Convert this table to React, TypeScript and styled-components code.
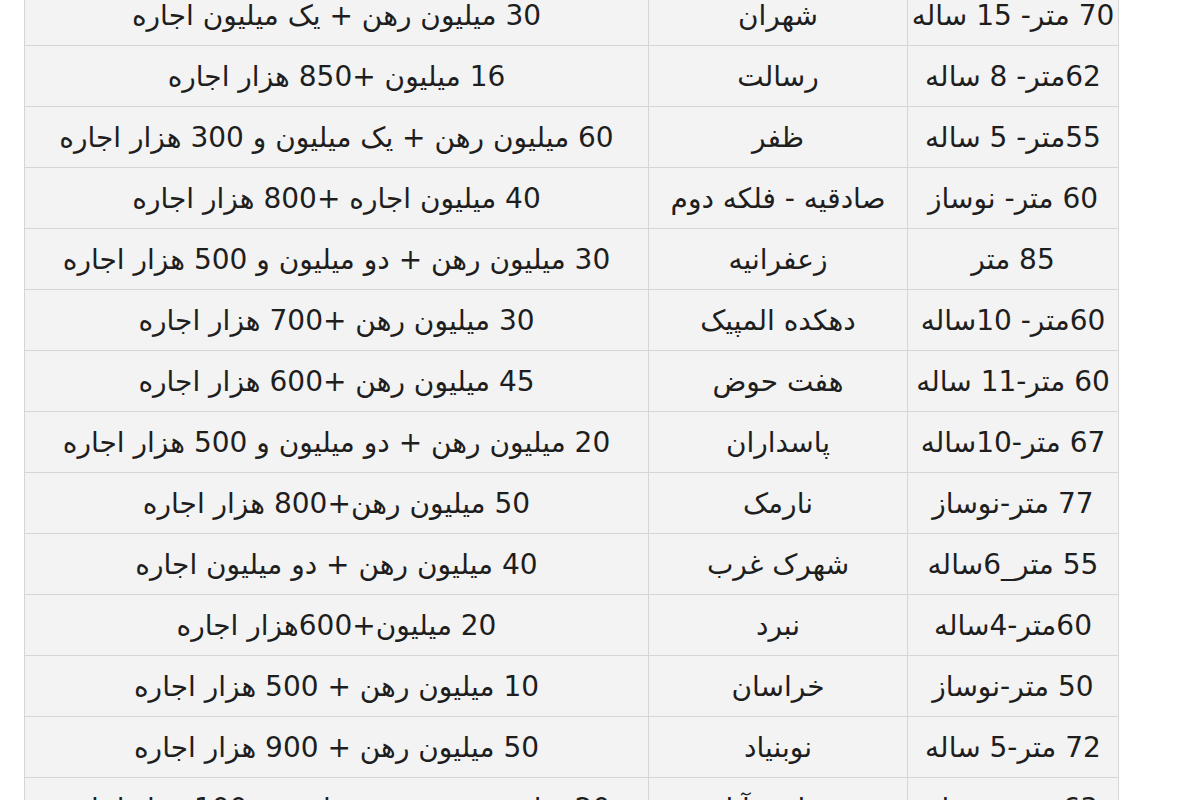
import { createGlobalStyle, styled } from 'styled-components';

const GlobalStyle = createGlobalStyle`
  html, body {
    margin: 0;
    padding: 0;
    background: #fff;
    overflow: hidden;
  }
  body {
    font-family: 'DejaVu Sans', sans-serif;
  }
`;

const Page = styled.div`
  width: 1200px;
  height: 800px;
  overflow: hidden;
  padding-left: 24px;
  box-sizing: border-box;
`;

const Table = styled.table`
  direction: rtl;
  margin-top: -16px;
  width: 1094px;
  border-collapse: collapse;
  table-layout: fixed;
  background: #f3f3f3;
  border: 1px solid #d6d6d6;
`;

const Col = styled.col<{ $w: number }>`
  width: ${p => p.$w}px;
`;

const Cell = styled.td`
  height: 60px;
  padding: 0;
  border: 1px solid #d6d6d6;
  text-align: center;
  vertical-align: middle;
  font-family: 'DejaVu Sans', sans-serif;
  font-size: 28px;
  color: #1e1e1e;
  white-space: nowrap;
  overflow: hidden;
`;

const rows: [string, string, string][] = [
  ['70 متر- 15 ساله', 'شهران', '30 میلیون رهن + یک میلیون اجاره'],
  ['62متر- 8 ساله', 'رسالت', '16 میلیون +850 هزار اجاره'],
  ['55متر- 5 ساله', 'ظفر', '60 میلیون رهن + یک میلیون و 300 هزار اجاره'],
  ['60 متر- نوساز', 'صادقیه - فلکه دوم', '40 میلیون اجاره +800 هزار اجاره'],
  ['85 متر', 'زعفرانیه', '30 میلیون رهن + دو میلیون و 500 هزار اجاره'],
  ['60متر- 10ساله', 'دهکده المپیک', '30 میلیون رهن +700 هزار اجاره'],
  ['60 متر-11 ساله', 'هفت حوض', '45 میلیون رهن +600 هزار اجاره'],
  ['67 متر-10ساله', 'پاسداران', '20 میلیون رهن + دو میلیون و 500 هزار اجاره'],
  ['77 متر-نوساز', 'نارمک', '50 میلیون رهن+800 هزار اجاره'],
  ['55 متر_6ساله', 'شهرک غرب', '40 میلیون رهن + دو میلیون اجاره'],
  ['60متر-4ساله', 'نبرد', '20 میلیون+600هزار اجاره'],
  ['50 متر-نوساز', 'خراسان', '10 میلیون رهن + 500 هزار اجاره'],
  ['72 متر-5 ساله', 'نوبنیاد', '50 میلیون رهن + 900 هزار اجاره'],
  ['63 متر- نوساز', 'سعادت آباد', '20 میلیون رهن + دو میلیون و 100 هزار اجاره'],
];

export default function App() {
  return (
    <>
      <GlobalStyle />
      <Page>
        <Table>
          <colgroup>
            <Col $w={211} />
            <Col $w={259} />
            <Col $w={624} />
          </colgroup>
          <tbody>
            {rows.map((r, i) => (
              <tr key={i}>
                <Cell>{r[0]}</Cell>
                <Cell>{r[1]}</Cell>
                <Cell>{r[2]}</Cell>
              </tr>
            ))}
          </tbody>
        </Table>
      </Page>
    </>
  );
}
